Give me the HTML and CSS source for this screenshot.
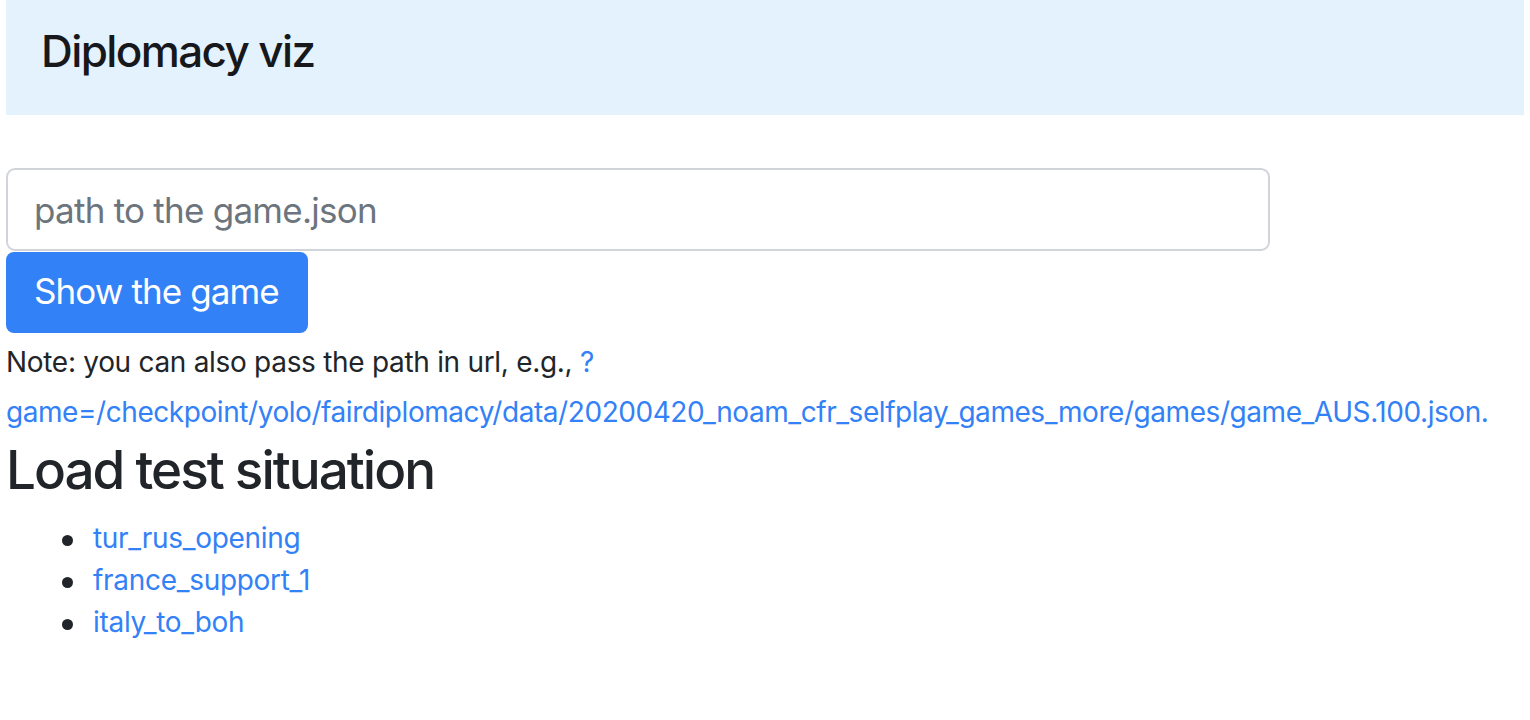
FILE: index.html
```html
<!DOCTYPE html>
<html lang="en">
<head>
<meta charset="utf-8">
<title>Diplomacy viz</title>
<link rel="stylesheet" href="styles.css">
</head>
<body>
<nav class="navbar">
  <span class="brand">Diplomacy viz</span>
</nav>
<form class="game-form">
  <input class="path-input" type="text" placeholder="path to the game.json">
  <button class="btn-primary" type="button">Show the game</button>
</form>
<p class="note">Note: you can also pass the path in url, e.g., <a class="note-link" href="#">?game=/checkpoint/yolo/fairdiplomacy/data/20200420_noam_cfr_selfplay_games_more/games/game_AUS.100.json.</a></p>
<h2 class="section-title">Load test situation</h2>
<ul class="situations">
  <li><a href="#">tur_rus_opening</a></li>
  <li><a href="#">france_support_1</a></li>
  <li><a href="#">italy_to_boh</a></li>
</ul>
</body>
</html>
```
FILE: styles.css
```css
html, body {
  margin: 0;
  padding: 0;
}
body {
  margin: 0 6px;
  font-family: Inter, "Liberation Sans", sans-serif;
  font-size: 28px;
  line-height: 1.5;
  letter-spacing: -0.3px;
  color: #212529;
  background: #ffffff;
}
a {
  color: #3381f6;
  text-decoration: none;
}
.navbar {
  height: 115px;
  box-sizing: border-box;
  background: #e4f2fd;
  padding: 25px 0 0 35px;
}
.brand {
  display: block;
  font-size: 44px;
  line-height: 53px;
  font-weight: 500;
  letter-spacing: -1.6px;
  color: #16181b;
}
.game-form {
  margin: 53px 0 0 0;
  display: flex;
  flex-direction: column;
  align-items: flex-start;
  gap: 1px;
}
.path-input {
  box-sizing: border-box;
  width: 1264px;
  height: 83px;
  margin: 0;
  padding: 0 26px;
  border: 2px solid #d1d5da;
  border-radius: 9px;
  font-family: inherit;
  font-size: 35px;
  letter-spacing: -0.75px;
  color: #495057;
  background: #fff;
  outline: none;
}
.path-input::placeholder {
  color: #6c757d;
}
.btn-primary {
  box-sizing: border-box;
  height: 81px;
  width: 302px;
  margin: 0;
  padding: 0 0 4px 28px;
  border: none;
  border-radius: 8px;
  background: #3381f6;
  color: #fff;
  font-family: inherit;
  font-size: 35px;
  letter-spacing: -0.9px;
  text-align: left;
  display: flex;
  align-items: center;
}
.note {
  margin: 4px 0 0 0;
  line-height: 50px;
}
.note-link {
  letter-spacing: -0.44px;
}
.section-title {
  margin: 1px 0 0 0;
  font-size: 53px;
  line-height: 65px;
  font-weight: 500;
  letter-spacing: -2px;
}
.situations {
  margin: 14px 0 0 0;
  padding-left: 87px;
  line-height: 42px;
  list-style: none;
}
.situations li::before {
  content: "";
  display: inline-block;
  width: 11px;
  height: 11px;
  border-radius: 50%;
  background: #212529;
  margin-left: -31px;
  margin-right: 20px;
  vertical-align: 2px;
}
```
